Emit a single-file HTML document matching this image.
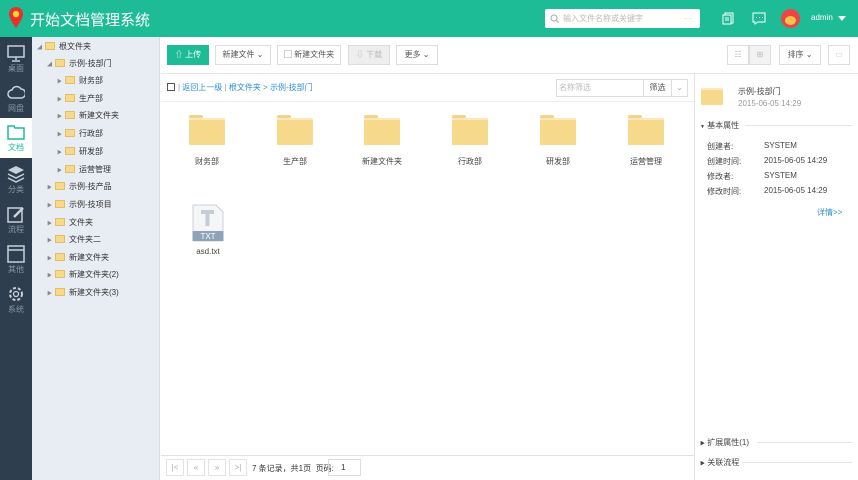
<!DOCTYPE html>
<html><head><meta charset="utf-8"><style>
*{margin:0;padding:0;box-sizing:border-box}
body{width:858px;height:480px;overflow:hidden;font-family:"Liberation Sans","Noto Sans CJK SC",sans-serif;font-size:8px;color:#333;background:#fff;position:relative}
.abs{position:absolute}
#hd{left:0;top:0;width:858px;height:37px;background:#1dbc97}
#nav{left:0;top:37px;width:32px;height:443px;background:#2e3e4f}
.ni{position:absolute;left:0;width:32px;height:40px;text-align:center;color:#8a97a5;font-size:8px}
.ni svg{display:block;margin:5px auto 1px}
#tree{left:32px;top:37px;width:128px;height:443px;background:#e8edf3;border-right:1px solid #d8dde3}
.ti{position:absolute;height:14px;line-height:14px;font-size:8px;color:#333;white-space:nowrap}
.ti .ar{display:inline-block;width:8px;color:#888;font-size:5px}
.fi{display:inline-block;width:10px;height:8px;background:#f7d98b;border:1px solid #e3be66;vertical-align:-1px;margin-right:4px}
.btn{position:absolute;top:45px;height:20px;border:1px solid #ddd;background:#fff;line-height:18px;font-size:8px;color:#555;text-align:center}
.fold{position:absolute;width:36px;height:30px}
.fold .tab{position:absolute;left:0;top:0;width:14px;height:5px;background:#f2d38c;border-radius:2px 2px 0 0}
.fold .bd{position:absolute;left:0;top:3px;width:36px;height:27px;background:#f7d98b;border-top:2px solid #fbe9bd;border-radius:1px}
.fl{position:absolute;width:60px;text-align:center;font-size:8px;color:#444}
.pr{position:absolute;font-size:8px;color:#444}
</style></head><body>
<div id="hd" class="abs">
 <svg class="abs" style="left:9px;top:7px" width="14" height="22" viewBox="0 0 14 22"><path d="M7 0C3 0 0 3 0 7c0 5 7 14 7 14s7-9 7-14C14 3 11 0 7 0z" fill="#e8312c"/><circle cx="7" cy="7" r="3.2" fill="#fbd52e"/></svg>
 <div class="abs" style="left:30px;top:9px;font-size:15px;color:#fff">开始文档管理系统</div>
 <div class="abs" style="left:545px;top:9px;width:155px;height:19px;background:#fff;border-radius:2px;color:#bbb;font-size:8px;line-height:19px;padding-left:18px">输入文件名称或关键字<span style="position:absolute;right:8px">···</span>
  <svg class="abs" style="left:5px;top:5px" width="9" height="9"><circle cx="4" cy="4" r="3" fill="none" stroke="#aaa"/><path d="M6 6l3 3" stroke="#aaa"/></svg></div>
 <svg class="abs" style="left:722px;top:12px" width="12" height="13"><rect x="3" y="1" width="8" height="10" fill="none" stroke="#fff"/><rect x="1" y="3" width="8" height="9" fill="#1dbc97" stroke="#fff"/><path d="M3 6h4M3 8h4" stroke="#fff"/></svg>
 <svg class="abs" style="left:752px;top:12px" width="14" height="13"><path d="M1 1h12v9H6l-3 2v-2H1z" fill="none" stroke="#fff"/><path d="M4 5.5h1M7 5.5h1M10 5.5h1" stroke="#fff"/></svg>
 <div class="abs" style="left:781px;top:9px;width:19px;height:19px;border-radius:50%;background:#e44"><div class="abs" style="left:4px;top:7px;width:11px;height:9px;border-radius:50%;background:#f5c34a"></div></div>
 <div class="abs" style="left:811px;top:13px;color:#fff;font-size:8px">admin</div>
 <div class="abs" style="left:838px;top:16px;border:4px solid transparent;border-top:5px solid #fff"></div>
</div>
<div id="nav" class="abs">
 <div class="ni" style="top:2px"><svg width="18" height="18"><rect x="1" y="2" width="16" height="11" fill="none" stroke="#c9d1da" stroke-width="1.5"/><path d="M9 13v3M5 17h8" stroke="#c9d1da" stroke-width="1.5"/></svg>桌面</div>
 <div class="ni" style="top:42px"><svg width="18" height="18"><path d="M5 14a4 4 0 010-8 5 5 0 019-1 4 4 0 010 9z" fill="none" stroke="#c9d1da" stroke-width="1.5"/></svg>网盘</div>
 <div class="ni" style="top:81px;background:#fff;color:#1dbc97;height:40px"><svg width="18" height="18"><path d="M1 3h6l1 2h9v11H1z" fill="none" stroke="#1dbc97" stroke-width="1.5"/></svg>文档</div>
 <div class="ni" style="top:123px"><svg width="18" height="18"><path d="M9 1l8 4-8 4-8-4z" fill="#c9d1da"/><path d="M1 9l8 4 8-4M1 13l8 4 8-4" fill="none" stroke="#c9d1da" stroke-width="1.5"/></svg>分类</div>
 <div class="ni" style="top:163px"><svg width="18" height="18"><rect x="1" y="3" width="14" height="14" fill="none" stroke="#c9d1da" stroke-width="1.5"/><path d="M7 12l9-9" stroke="#c9d1da" stroke-width="2.5"/></svg>流程</div>
 <div class="ni" style="top:203px"><svg width="18" height="18"><rect x="1" y="1" width="16" height="16" fill="none" stroke="#c9d1da" stroke-width="1.5"/><path d="M1 5h16" stroke="#c9d1da" stroke-width="1.5"/></svg>其他</div>
 <div class="ni" style="top:243px"><svg width="18" height="18"><circle cx="9" cy="9" r="6" fill="none" stroke="#c9d1da" stroke-width="2" stroke-dasharray="3 2"/><circle cx="9" cy="9" r="2.5" fill="none" stroke="#c9d1da" stroke-width="1.3"/></svg>系统</div>
</div>
<div id="tree" class="abs">
 <div class="ti" style="left:5px;top:3px"><span class="ar">◢</span><span class="fi"></span>根文件夹</div>
 <div class="ti" style="left:15px;top:20px"><span class="ar">◢</span><span class="fi"></span>示例-技部门</div>
 <div class="ti" style="left:25px;top:37px"><span class="ar">▶</span><span class="fi"></span>财务部</div>
 <div class="ti" style="left:25px;top:55px"><span class="ar">▶</span><span class="fi"></span>生产部</div>
 <div class="ti" style="left:25px;top:72px"><span class="ar">▶</span><span class="fi"></span>新建文件夹</div>
 <div class="ti" style="left:25px;top:90px"><span class="ar">▶</span><span class="fi"></span>行政部</div>
 <div class="ti" style="left:25px;top:108px"><span class="ar">▶</span><span class="fi"></span>研发部</div>
 <div class="ti" style="left:25px;top:126px"><span class="ar">▶</span><span class="fi"></span>运营管理</div>
 <div class="ti" style="left:15px;top:143px"><span class="ar">▶</span><span class="fi"></span>示例-技产品</div>
 <div class="ti" style="left:15px;top:161px"><span class="ar">▶</span><span class="fi"></span>示例-技项目</div>
 <div class="ti" style="left:15px;top:179px"><span class="ar">▶</span><span class="fi"></span>文件夹</div>
 <div class="ti" style="left:15px;top:196px"><span class="ar">▶</span><span class="fi"></span>文件夹二</div>
 <div class="ti" style="left:15px;top:214px"><span class="ar">▶</span><span class="fi"></span>新建文件夹</div>
 <div class="ti" style="left:15px;top:231px"><span class="ar">▶</span><span class="fi"></span>新建文件夹(2)</div>
 <div class="ti" style="left:15px;top:249px"><span class="ar">▶</span><span class="fi"></span>新建文件夹(3)</div>
</div>
<div class="abs" style="left:161px;top:73px;width:697px;height:1px;background:#e6e6e6"></div>
<div class="btn" style="left:167px;width:42px;background:#1dbc97;border-color:#1dbc97;color:#fff">⇧ 上传</div>
<div class="btn" style="left:215px;width:56px">新建文件 ⌄</div>
<div class="btn" style="left:277px;width:64px">▢ 新建文件夹</div>
<div class="btn" style="left:348px;width:42px;background:#eee;color:#bbb">⇩ 下载</div>
<div class="btn" style="left:396px;width:42px">更多 ⌄</div>
<div class="btn" style="left:727px;width:22px;color:#bbb">☷</div>
<div class="btn" style="left:749px;width:22px;background:#f2f2f2;color:#bbb">⊞</div>
<div class="btn" style="left:779px;width:42px">排序 ⌄</div>
<div class="btn" style="left:828px;width:22px;color:#ccc">▭</div>
<div class="abs" style="left:167px;top:83px;width:8px;height:8px;border:1px solid #555"></div>
<div class="abs" style="left:178px;top:82px;color:#2a8fd0;font-size:8px"><span style="color:#999">|</span> 返回上一级 <span style="color:#999">|</span> 根文件夹 &gt; 示例-技部门</div>
<div class="abs" style="left:556px;top:79px;width:88px;height:18px;border:1px solid #ddd;color:#bbb;line-height:16px;padding-left:2px">名称筛选</div>
<div class="abs" style="left:643px;top:79px;width:29px;height:18px;border:1px solid #ddd;line-height:16px;text-align:center;color:#555">筛选</div>
<div class="abs" style="left:671px;top:79px;width:17px;height:18px;border:1px solid #ddd;line-height:16px;text-align:center;color:#aaa">⌄</div>
<div class="abs" style="left:161px;top:101px;width:533px;height:1px;background:#eee"></div>
<div class="abs" style="left:694px;top:74px;width:1px;height:406px;background:#e6e6e6"></div>

<div class="fold" style="left:189px;top:115px"><div class="tab"></div><div class="bd"></div></div>
<div class="fold" style="left:277px;top:115px"><div class="tab"></div><div class="bd"></div></div>
<div class="fold" style="left:364px;top:115px"><div class="tab"></div><div class="bd"></div></div>
<div class="fold" style="left:452px;top:115px"><div class="tab"></div><div class="bd"></div></div>
<div class="fold" style="left:540px;top:115px"><div class="tab"></div><div class="bd"></div></div>
<div class="fold" style="left:628px;top:115px"><div class="tab"></div><div class="bd"></div></div>
<div class="fl" style="left:177px;top:156px">财务部</div>
<div class="fl" style="left:265px;top:156px">生产部</div>
<div class="fl" style="left:352px;top:156px">新建文件夹</div>
<div class="fl" style="left:440px;top:156px">行政部</div>
<div class="fl" style="left:528px;top:156px">研发部</div>
<div class="fl" style="left:616px;top:156px">运营管理</div>
<svg class="abs" style="left:192px;top:204px" width="32" height="38"><path d="M1 1h23l7 7v29H1z" fill="#f4f6f8" stroke="#ccd3da"/><path d="M9 8h13M15.5 8v14" stroke="#c5ccd3" stroke-width="4"/><rect x="0.5" y="27" width="31" height="10" fill="#8fa3b8"/><text x="16" y="35" font-size="8" fill="#fff" text-anchor="middle" font-family="Liberation Sans">TXT</text></svg>
<div class="fl" style="left:178px;top:247px">asd.txt</div>

<div class="abs" style="left:161px;top:455px;width:533px;height:1px;background:#e3e3e3"></div>
<div class="abs" style="left:166px;top:459px;width:18px;height:17px;border:1px solid #e3e3e3;color:#aaa;text-align:center;line-height:15px">|&lt;</div>
<div class="abs" style="left:187px;top:459px;width:18px;height:17px;border:1px solid #e3e3e3;color:#aaa;text-align:center;line-height:15px">«</div>
<div class="abs" style="left:208px;top:459px;width:18px;height:17px;border:1px solid #e3e3e3;color:#aaa;text-align:center;line-height:15px">»</div>
<div class="abs" style="left:229px;top:459px;width:18px;height:17px;border:1px solid #e3e3e3;color:#aaa;text-align:center;line-height:15px">&gt;|</div>
<div class="abs" style="left:252px;top:463px">7 条记录，共1页 &nbsp;页码:</div>
<div class="abs" style="left:328px;top:459px;width:33px;height:17px;border:1px solid #ddd;line-height:15px;padding-left:12px">1</div>

<div class="fold" style="left:701px;top:85px;width:22px;height:20px"><div class="bd" style="width:22px;height:17px"></div></div>
<div class="pr" style="left:738px;top:86px">示例-技部门</div>
<div class="pr" style="left:738px;top:99px;color:#999">2015-06-05 14:29</div>
<div class="pr" style="left:700px;top:120px"><span style="font-size:5px">▼</span> 基本属性</div>
<div class="abs" style="left:745px;top:125px;width:107px;height:1px;background:#e6e6e6"></div>
<div class="pr" style="left:707px;top:141px">创建者:</div><div class="pr" style="left:764px;top:141px">SYSTEM</div>
<div class="pr" style="left:707px;top:156px">创建时间:</div><div class="pr" style="left:764px;top:156px">2015-06-05 14:29</div>
<div class="pr" style="left:707px;top:171px">修改者:</div><div class="pr" style="left:764px;top:171px">SYSTEM</div>
<div class="pr" style="left:707px;top:186px">修改时间:</div><div class="pr" style="left:764px;top:186px">2015-06-05 14:29</div>
<div class="pr" style="left:817px;top:207px;color:#2a8fd0">详情&gt;&gt;</div>
<div class="pr" style="left:700px;top:437px"><span style="font-size:5px">▶</span> 扩展属性(1)</div>
<div class="abs" style="left:757px;top:442px;width:95px;height:1px;background:#e6e6e6"></div>
<div class="pr" style="left:700px;top:457px"><span style="font-size:5px">▶</span> 关联流程</div>
<div class="abs" style="left:742px;top:462px;width:110px;height:1px;background:#e6e6e6"></div>
</body></html>
